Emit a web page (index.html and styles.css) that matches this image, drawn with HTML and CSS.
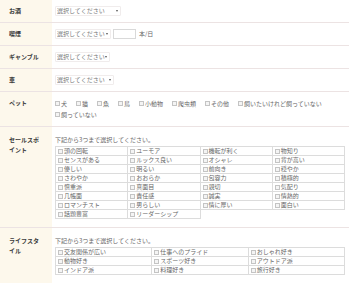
FILE: index.html
```html
<!DOCTYPE html>
<html lang="ja">
<head>
    <meta charset="UTF-8">
    <meta name="viewport" content="width=device-width, initial-scale=1.0">
    <title>プロフィール編集</title>
    <link rel="stylesheet" href="styles.css">
</head>
<body>
    <table class="profile">
        <tr>
            <th>お酒</th>
            <td><span class="pick pick-wide"><select><option>選択してください</option></select></span></td>
        </tr>
        <tr>
            <th>喫煙</th>
            <td>
                <div class="smoke">
                    <span class="pick pick-smoke"><select><option>選択してください</option></select></span>
                    <input type="text" class="count">
                    <span>本/日</span>
                </div>
            </td>
        </tr>
        <tr>
            <th>ギャンブル</th>
            <td><span class="pick pick-gamble"><select><option>選択してください</option></select></span></td>
        </tr>
        <tr>
            <th>車</th>
            <td><span class="pick pick-car"><select><option>選択してください</option></select></span></td>
        </tr>
        <tr>
            <th>ペット</th>
            <td>
                <div class="pets">
                    <label><input type="checkbox">犬</label>
                    <label><input type="checkbox">猫</label>
                    <label><input type="checkbox">魚</label>
                    <label><input type="checkbox">鳥</label>
                    <label><input type="checkbox">小動物</label>
                    <label><input type="checkbox">爬虫類</label>
                    <label><input type="checkbox">その他</label>
                    <label><input type="checkbox">飼いたいけれど飼っていない</label>
                    <label><input type="checkbox">飼っていない</label>
                </div>
            </td>
        </tr>
        <tr class="multi">
            <th>セールスポイント</th>
            <td>
                <p class="note">下記から3つまで選択してください。</p>
                <table class="choices four">
                    <tr>
                        <td><label><input type="checkbox">頭の回転</label></td>
                        <td><label><input type="checkbox">ユーモア</label></td>
                        <td><label><input type="checkbox">機転が利く</label></td>
                        <td><label><input type="checkbox">物知り</label></td>
                    </tr>
                    <tr>
                        <td><label><input type="checkbox">センスがある</label></td>
                        <td><label><input type="checkbox">ルックス良い</label></td>
                        <td><label><input type="checkbox">オシャレ</label></td>
                        <td><label><input type="checkbox">背が高い</label></td>
                    </tr>
                    <tr>
                        <td><label><input type="checkbox">優しい</label></td>
                        <td><label><input type="checkbox">明るい</label></td>
                        <td><label><input type="checkbox">前向き</label></td>
                        <td><label><input type="checkbox">穏やか</label></td>
                    </tr>
                    <tr>
                        <td><label><input type="checkbox">さわやか</label></td>
                        <td><label><input type="checkbox">おおらか</label></td>
                        <td><label><input type="checkbox">包容力</label></td>
                        <td><label><input type="checkbox">積極的</label></td>
                    </tr>
                    <tr>
                        <td><label><input type="checkbox">慎重派</label></td>
                        <td><label><input type="checkbox">真面目</label></td>
                        <td><label><input type="checkbox">親切</label></td>
                        <td><label><input type="checkbox">気配り</label></td>
                    </tr>
                    <tr>
                        <td><label><input type="checkbox">几帳面</label></td>
                        <td><label><input type="checkbox">責任感</label></td>
                        <td><label><input type="checkbox">誠実</label></td>
                        <td><label><input type="checkbox">情熱的</label></td>
                    </tr>
                    <tr>
                        <td><label><input type="checkbox">ロマンチスト</label></td>
                        <td><label><input type="checkbox">男らしい</label></td>
                        <td><label><input type="checkbox">情に厚い</label></td>
                        <td><label><input type="checkbox">面白い</label></td>
                    </tr>
                    <tr>
                        <td><label><input type="checkbox">話題豊富</label></td>
                        <td><label><input type="checkbox">リーダーシップ</label></td>
                    </tr>
                </table>
            </td>
        </tr>
        <tr class="multi">
            <th>ライフスタイル</th>
            <td>
                <p class="note">下記から3つまで選択してください。</p>
                <table class="choices three">
                    <tr>
                        <td><label><input type="checkbox">交友関係が広い</label></td>
                        <td><label><input type="checkbox">仕事へのプライド</label></td>
                        <td><label><input type="checkbox">おしゃれ好き</label></td>
                    </tr>
                    <tr>
                        <td><label><input type="checkbox">動物好き</label></td>
                        <td><label><input type="checkbox">スポーツ好き</label></td>
                        <td><label><input type="checkbox">アウトドア派</label></td>
                    </tr>
                    <tr>
                        <td><label><input type="checkbox">インドア派</label></td>
                        <td><label><input type="checkbox">料理好き</label></td>
                        <td><label><input type="checkbox">旅行好き</label></td>
                    </tr>
                </table>
            </td>
        </tr>
    </table>
</body>
</html>
```

FILE: styles.css
```css
body {
    margin: 0;
    padding: 0;
    background: #fff;
    font-family: "Noto Sans CJK JP", "Noto Sans", sans-serif;
    font-size: 6px;
    line-height: 10px;
    color: #666;
}
.profile {
    width: 100%;
    border-collapse: collapse;
    table-layout: fixed;
}
.profile > tbody > tr > th,
.profile > tbody > tr > td {
    vertical-align: top;
    border-bottom: 1px solid #ece3e3;
    padding: 6px 4px 6px 3px;
    text-align: left;
}
.profile > tbody > tr > th {
    width: 35px;
    padding-left: 9px;
    padding-right: 8px;
    background: #fdf8ec;
    color: #3a3a3a;
    font-weight: bold;
}
.profile > tbody > tr.multi > th,
.profile > tbody > tr.multi > td {
    padding-top: 8px;
    padding-bottom: 8px;
}
.pick {
    position: relative;
    display: inline-block;
    vertical-align: top;
}
.pick select {
    -webkit-appearance: none;
    appearance: none;
    display: block;
    font: inherit;
    color: #777;
    height: 10px;
    line-height: 8px;
    padding: 0 0 0 1px;
    margin: 0;
    border: 1px solid #f0ecec;
    border-radius: 1px;
    background: #fff;
    width: 56px;
    outline: none;
}
.pick::after {
    content: "";
    position: absolute;
    right: 3px;
    top: 4px;
    border-left: 1.5px solid transparent;
    border-right: 1.5px solid transparent;
    border-top: 2px solid #555;
}
.pick-wide select {
    width: 66px;
}
.pick-smoke select {
    width: 56px;
}
.pick-gamble select {
    width: 55px;
}
.pick-car select {
    width: 59px;
}
.smoke {
    display: flex;
    align-items: center;
    gap: 2px;
}
.count {
    width: 23px;
    height: 10px;
    box-sizing: border-box;
    margin: 0 1px 0 0;
    padding: 0;
    border: 1px solid #d9d9d9;
    font: inherit;
}
.pets {
    display: flex;
    flex-wrap: wrap;
    line-height: 11px;
}
.pets label {
    margin-right: 9px;
}
label {
    display: inline-flex;
    align-items: center;
    white-space: nowrap;
}
input[type="checkbox"] {
    -webkit-appearance: none;
    appearance: none;
    width: 5px;
    height: 5px;
    margin: 0 1px 0 0;
    border: 1px solid #c4c4c4;
    background: #f4f4f4;
    box-sizing: border-box;
}
.note {
    margin: 0 0 1px;
}
.choices {
    width: 100%;
    border-collapse: collapse;
    table-layout: fixed;
}
.choices td {
    border: 1px solid #dcdcdc;
    padding: 0 2px;
    height: 8px;
    line-height: 8px;
    vertical-align: middle;
}
.choices label {
    display: flex;
    height: 8px;
}
```
